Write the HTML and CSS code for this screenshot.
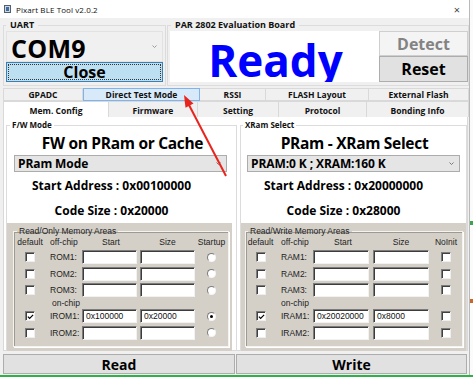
FILE: index.html
```html
<!DOCTYPE html>
<html>
<head>
<meta charset="utf-8">
<link rel="stylesheet" href="styles.css">
</head>
<body>
<div class="screen">
  <div class="window">
    <div class="titlebar">
      <svg class="appicon" width="7" height="8" viewBox="0 0 7 8"><rect x="0.5" y="0.5" width="6" height="7" fill="#d0d6de" stroke="#50606e"/><rect x="2" y="2" width="3" height="4" fill="#3a6ea5"/></svg>
      <span class="title">Pixart BLE Tool v2.0.2</span>
      <span class="xbtn">×</span>
    </div>

    <div class="top">
      <fieldset class="grp uart">
        <legend>UART</legend>
        <div class="bigcombo"><span>COM9</span><svg class="chev" width="5" height="3" viewBox="0 0 5 3"><path d="M0.5 0.5 L2.5 2.5 L4.5 0.5" fill="none" stroke="#9a9a9a"/></svg></div>
        <div class="closebtn"><span>Close</span></div>
      </fieldset>
      <fieldset class="grp board">
        <legend>PAR 2802 Evaluation Board</legend>
        <div class="ready"><span>Ready</span></div>
        <div class="sidebtns">
          <div class="btn detect">Detect</div>
          <div class="btn reset">Reset</div>
        </div>
      </fieldset>
    </div>

    <div class="tabs">
      <div class="tabrow row1">
        <div class="tab">GPADC</div>
        <div class="tab hover">Direct Test Mode</div>
        <div class="tab">RSSI</div>
        <div class="tab">FLASH Layout</div>
        <div class="tab">External Flash</div>
      </div>
      <div class="tabrow row2">
        <div class="tab sel">Mem. Config</div>
        <div class="tab">Firmware</div>
        <div class="tab">Setting</div>
        <div class="tab">Protocol</div>
        <div class="tab">Bonding Info</div>
      </div>
    </div>

    <div class="panel">
      <fieldset class="col leftcol">
        <legend>F/W Mode</legend>
        <div class="heading">FW on PRam or Cache</div>
        <div class="combo"><span>PRam Mode</span><svg class="chev" width="5" height="3" viewBox="0 0 5 3"><path d="M0.5 0.5 L2.5 2.5 L4.5 0.5" fill="none" stroke="#7a7a7a"/></svg></div>
        <div class="info first">Start Address : 0x00100000</div>
        <div class="info">Code Size : 0x20000</div>
        <div class="graybox lg">
          <fieldset class="memgrp">
            <legend>Read/Only Memory Areas</legend>
            <div class="mgrid lgrid">
              <span class="h">default</span><span class="h hl">off-chip</span><span class="h">Start</span><span class="h">Size</span><span class="h">Startup</span>

              <span class="cb"></span><span class="lbl">ROM1:</span><span class="inp"></span><span class="inp"></span><span class="rd"></span>
              <span class="cb"></span><span class="lbl">ROM2:</span><span class="inp"></span><span class="inp"></span><span class="rd"></span>
              <span class="cb"></span><span class="lbl">ROM3:</span><span class="inp"></span><span class="inp"></span><span class="rd"></span>
              <span></span><span class="lbl onchip">on-chip</span><span></span><span></span><span></span>
              <span class="cb"><svg width="8" height="8" viewBox="0 0 8 8"><path d="M1 3.5 L3 5.5 L7 1.5" fill="none" stroke="#000" stroke-width="1.4"/></svg></span><span class="lbl">IROM1:</span><span class="inp">0x100000</span><span class="inp">0x20000</span><span class="rd on"></span>
              <span class="cb"></span><span class="lbl">IROM2:</span><span class="inp"></span><span class="inp"></span><span class="rd"></span>
            </div>
          </fieldset>
        </div>
      </fieldset>

      <fieldset class="col rightcol">
        <legend>XRam Select</legend>
        <div class="heading">PRam - XRam Select</div>
        <div class="combo"><span>PRAM:0 K ; XRAM:160 K</span><svg class="chev" width="5" height="3" viewBox="0 0 5 3"><path d="M0.5 0.5 L2.5 2.5 L4.5 0.5" fill="none" stroke="#7a7a7a"/></svg></div>
        <div class="info first">Start Address : 0x20000000</div>
        <div class="info">Code Size : 0x28000</div>
        <div class="graybox rg">
          <fieldset class="memgrp">
            <legend>Read/Write Memory Areas</legend>
            <div class="mgrid rgrid">
              <span class="h">default</span><span class="h hl">off-chip</span><span class="h">Start</span><span class="h">Size</span><span class="h">NoInit</span>

              <span class="cb"></span><span class="lbl">RAM1:</span><span class="inp"></span><span class="inp"></span><span class="cb"></span>
              <span class="cb"></span><span class="lbl">RAM2:</span><span class="inp"></span><span class="inp"></span><span class="cb"></span>
              <span class="cb"></span><span class="lbl">RAM3:</span><span class="inp"></span><span class="inp"></span><span class="cb"></span>
              <span></span><span class="lbl onchip">on-chip</span><span></span><span></span><span></span>
              <span class="cb"><svg width="8" height="8" viewBox="0 0 8 8"><path d="M1 3.5 L3 5.5 L7 1.5" fill="none" stroke="#000" stroke-width="1.4"/></svg></span><span class="lbl">IRAM1:</span><span class="inp">0x20020000</span><span class="inp">0x8000</span><span class="cb"></span>
              <span class="cb"></span><span class="lbl">IRAM2:</span><span class="inp"></span><span class="inp"></span><span class="cb"></span>
            </div>
          </fieldset>
        </div>
      </fieldset>
    </div>

    <div class="actions">
      <div class="btn act">Read</div>
      <div class="btn act">Write</div>
    </div>
  </div>
  <div class="behind">
    <div class="bit green"></div>
    <div class="bit orange"></div>
  </div>
</div>
<div class="greenline"></div>

<svg class="arrow" width="473" height="377" viewBox="0 0 473 377">
  <line x1="226" y1="176" x2="189" y2="105" stroke="#e8251c" stroke-width="2"/>
  <polygon points="184,95 193.5,103.6 185.5,107.8" fill="#e8251c"/>
</svg>
</body>
</html>
```

FILE: styles.css
```css
* { box-sizing: border-box; }

body {
  margin: 0;
  width: 473px;
  height: 377px;
  overflow: hidden;
  background: #ffffff;
  font-family: "Open Sans", "Noto Sans", sans-serif;
  color: #000;
  position: relative;
}

.screen {
  display: flex;
  height: 375px;
}

.window {
  width: 470px;
  height: 375px;
  background: #f0f0f0;
  border-right: 1px solid #b9b9b9;
  display: flex;
  flex-direction: column;
}

.behind {
  flex: 1;
  background: #fbfbfb;
  display: flex;
  flex-direction: column;
}
.bit { width: 3px; height: 4px; }
.bit.green { background: #3fa34d; margin-top: 221px; }
.bit.orange { background: #c9662a; margin-top: 74px; }

.greenline {
  height: 2px;
  background: #2fb14a;
}

/* Title bar */
.titlebar {
  height: 18px;
  background: #ffffff;
  display: flex;
  align-items: center;
  padding-left: 4px;
  font-size: 8px;
  color: #111;
}
.appicon { margin-right: 5px; }
.title { flex: 1; letter-spacing: 0.1px; }
.xbtn {
  width: 16px;
  font-size: 11px;
  color: #444;
  margin-right: 4px;
  text-align: center;
}

/* Top groups */
.top {
  display: flex;
  padding: 2px 0 0 3px;
  height: 68px;
}
.grp {
  margin: 0;
  border: 1px solid #dcdcdc;
  padding: 1px 2px 2px 2px;
  min-width: 0;
}
.grp legend {
  font-size: 9px;
  font-weight: 700;
  line-height: 10px;
  padding: 0 4px;
  color: #111;
}
.uart { width: 163px; }
.board {
  flex: 1;
  margin-left: 1px;
  padding-right: 0;
  display: flex;
}
.board legend { margin-left: 1px; }

.bigcombo {
  height: 31px;
  background: #f0f0f0;
  border: 1px solid #e2e2e2;
  display: flex;
  align-items: center;
  justify-content: space-between;
  padding: 2px 5px 0 4px;
  font-size: 25px;
  font-weight: 700;
  letter-spacing: 0.3px;
}
.bigcombo span { line-height: 28px; }
.bigcombo .chev { margin-top: -3px; }

.closebtn {
  height: 20px;
  background: #bcdff1;
  border: 1px solid #3c7fb1;
  padding: 1px;
}
.closebtn span {
  display: flex;
  height: 100%;
  align-items: center;
  justify-content: center;
  border: 1px dotted #333;
  font-size: 16px;
  font-weight: 700;
  line-height: 16px;
}

.ready {
  width: 209px;
  height: 51px;
  background: #ffffff;
  color: #0000ff;
  font-size: 44px;
  font-weight: 700;
  text-align: center;
  overflow: hidden;
  display: flex;
  justify-content: center;
  align-items: flex-start;
}
.ready span {
  display: block;
  line-height: 46px;
  height: 51px;
  padding-top: 6px;
  padding-left: 2px;
}
.sidebtns {
  flex: 1;
  display: flex;
  flex-direction: column;
}
.btn {
  display: flex;
  align-items: center;
  justify-content: center;
  font-weight: 700;
}
.detect {
  height: 25px;
  background: #f4f4f4;
  border: 1px solid #cfcfcf;
  color: #838383;
  font-size: 16px;
}
.reset {
  height: 26px;
  background: #e1e1e1;
  border: 1px solid #adadad;
  font-size: 16px;
}

/* Tabs */
.tabs {
  margin-top: 2px;
  padding-left: 3px;
  width: 468px;
}
.tabrow {
  display: grid;
  border-left: 1px solid #d9d9d9;
}
.row1 {
  height: 13px;
  grid-template-columns: 79px 117px 66px 103px 100px;
}
.row2 {
  height: 16px;
  grid-template-columns: 105px 89px 81px 88px 102px;
}
.tab {
  border-top: 1px solid #d9d9d9;
  border-right: 1px solid #d9d9d9;
  background: #f0f0f0;
  font-size: 8.5px;
  font-weight: 700;
  display: flex;
  align-items: center;
  justify-content: center;
  color: #111;
}
.row1 .tab { border-bottom: 1px solid #d9d9d9; }
.tab.hover {
  background: #d8eaf9;
  border: 1px solid #7eb4ea;
}
.tab.sel {
  background: #ffffff;
  border-bottom: none;
}
.row2 .tab { padding-top: 1px; }

/* Panel */
.panel {
  margin-left: 3px;
  width: 465px;
  height: 234px;
  background: #ffffff;
  border: 1px solid #d9d9d9;
  border-top: none;
  display: grid;
  grid-template-columns: 233px 230px;
  padding-top: 3px;
}
.col {
  margin: 0;
  border: 1px solid #dcdcdc;
  border-bottom: none;
  padding: 0;
  min-width: 0;
  display: flex;
  flex-direction: column;
}
.col > legend {
  font-size: 8px;
  font-weight: 700;
  line-height: 10px;
  padding: 0 2px;
  margin-left: 3px;
  color: #111;
}
.leftcol { margin-left: 2px; }
.rightcol { margin-left: 3px; }
.rightcol > legend { margin-left: 2px; }

.heading {
  font-size: 15.5px;
  font-weight: 700;
  line-height: 20px;
  text-align: center;
  margin-top: 3px;
  padding-left: 2px;
  letter-spacing: -0.3px;
}
.combo {
  height: 17px;
  margin: 2px 9px 0 7px;
  background: #e5e5e5;
  border: 1px solid #acacac;
  display: flex;
  align-items: center;
  justify-content: space-between;
  padding: 0 5px 0 3px;
  font-size: 12px;
  font-weight: 700;
  letter-spacing: -0.1px;
}
.rightcol .combo { margin: 2px 6px 0 6px; }

.info {
  font-size: 12px;
  font-weight: 700;
  line-height: 16px;
  text-align: center;
  padding-right: 20px;
  margin-top: 9px;
}
.info.first { margin-top: 6px; }

.graybox {
  margin-top: 4px;
  background: #d4d0c8;
  padding: 3px 3px 4px 6px;
  flex: 1;
}
.graybox.lg { margin-right: 4px; }
.graybox.rg { padding-left: 4px; }

.memgrp {
  margin: 0;
  border: 1px solid #f4f3ef;
  box-shadow: inset 1px 1px 0 #9c9a94, 1px 1px 0 #fff;
  padding: 0 0 5px 0;
  height: 121px;
  min-width: 0;
  font-family: "Liberation Sans", Arial, sans-serif;
  color: #222;
}
.memgrp legend {
  font-size: 8.5px;
  font-weight: 400;
  line-height: 10px;
  padding: 0 2px;
  margin-left: 3px;
  color: #222;
}
.rg .memgrp legend { margin-left: 2px; }

.mgrid {
  display: grid;
  grid-template-rows: 11.5px 14px 14px 14px 7px 14px 14px;
  row-gap: 2.5px;
  align-items: center;
  font-size: 8.5px;
}
.lgrid { grid-template-columns: 32px 36px 58px 55px 33px; }
.rgrid { grid-template-columns: 29px 38px 60px 56px 34px; }

.h { text-align: center; line-height: 10px; }
.h.hl { text-align: left; padding-left: 4px; }
.rgrid .h.hl { padding-left: 6px; }
.lbl { padding-left: 4px; line-height: 10px; }
.rgrid .lbl { padding-left: 6px; }
.onchip { padding-left: 6px; }
.rgrid .onchip { padding-left: 6px; }

.inp {
  height: 14px;
  width: 55px;
  background: #ffffff;
  border-top: 1px solid #7c7c7c;
  border-left: 1px solid #7c7c7c;
  border-right: 1px solid #f2f2f2;
  border-bottom: 1px solid #f2f2f2;
  box-shadow: inset 1px 1px 0 #3c3c3c;
  font-size: 8.5px;
  line-height: 12px;
  padding-left: 3px;
  color: #111;
}
.rgrid .inp { width: 56px; }

.cb {
  justify-self: center;
  width: 10px;
  height: 10px;
  background: #ffffff;
  border-top: 1px solid #7c7c7c;
  border-left: 1px solid #7c7c7c;
  border-right: 1px solid #eeeeee;
  border-bottom: 1px solid #eeeeee;
  box-shadow: inset 1px 1px 0 #404040;
  display: flex;
  align-items: center;
  justify-content: center;
}
.cb svg { margin: 1px 0 0 1px; }

.rd {
  justify-self: center;
  width: 9px;
  height: 9px;
  border-radius: 50%;
  background: #ffffff;
  border: 1px solid;
  border-color: #7c7c7c #f4f4f4 #f4f4f4 #7c7c7c;
  display: flex;
  align-items: center;
  justify-content: center;
}
.rd.on::after {
  content: "";
  width: 3px;
  height: 3px;
  border-radius: 50%;
  background: #000;
}

/* Bottom actions */
.actions {
  display: grid;
  grid-template-columns: 232px 231px;
  column-gap: 1px;
  padding: 3px 0 0 3px;
}
.act {
  height: 20px;
  background: #e1e1e1;
  border: 1px solid #adadad;
  font-size: 14px;
}

.arrow {
  position: absolute;
  left: 0;
  top: 0;
  pointer-events: none;
}
```
